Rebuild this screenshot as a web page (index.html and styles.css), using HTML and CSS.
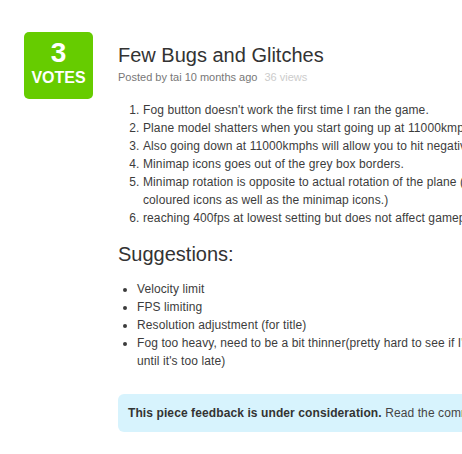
FILE: index.html
```html
<!DOCTYPE html>
<html lang="en">
<head>
<meta charset="utf-8">
<title>Few Bugs and Glitches</title>
<link rel="stylesheet" href="styles.css">
</head>
<body>
<div class="page">
  <div class="votes">
    <span class="votes-count">3</span>
    <span class="votes-label">VOTES</span>
  </div>
  <article class="idea">
    <h1 class="idea-title">Few Bugs and Glitches</h1>
    <p class="idea-meta">Posted by tai 10 months ago <span class="idea-views">36 views</span></p>
    <ol class="bug-list">
      <li>Fog button doesn't work the first time I ran the game.</li>
      <li>Plane model shatters when you start going up at 11000kmphs.</li>
      <li>Also going down at 11000kmphs will allow you to hit negative altitude.</li>
      <li>Minimap icons goes out of the grey box borders.</li>
      <li>Minimap rotation is opposite to actual rotation of the plane (both the coloured icons as well as the minimap icons.)</li>
      <li>reaching 400fps at lowest setting but does not affect gameplay.</li>
    </ol>
    <h2 class="section-title">Suggestions:</h2>
    <ul class="suggest-list">
      <li>Velocity limit</li>
      <li>FPS limiting</li>
      <li>Resolution adjustment (for title)</li>
      <li>Fog too heavy, need to be a bit thinner(pretty hard to see if I'm crashing until it's too late)</li>
    </ul>
    <div class="status"><strong>This piece feedback is under consideration.</strong> Read the comments.</div>
  </article>
</div>
</body>
</html>
```
FILE: styles.css
```css
html, body {
  margin: 0;
  padding: 0;
  overflow: hidden;
  background: #ffffff;
}
body {
  font-family: "Liberation Sans", Arial, sans-serif;
  font-size: 12px;
  color: #3c3c3c;
}
.page {
  display: flex;
  align-items: flex-start;
  gap: 25px;
  padding: 32px 0 0 24px;
  width: 600px;
}
.votes {
  flex: none;
  box-sizing: border-box;
  width: 69px;
  height: 67px;
  padding-top: 7px;
  background: #66cc00;
  border-radius: 5px;
  color: #ffffff;
  display: flex;
  flex-direction: column;
  align-items: center;
  font-weight: bold;
}
.votes-count {
  font-size: 28px;
  line-height: 28px;
}
.votes-label {
  margin-top: 3px;
  font-size: 16px;
  line-height: 16px;
}
.idea {
  flex: none;
  width: 418px;
}
.idea-title {
  margin: 11px 0 0;
  font-size: 20px;
  line-height: 24px;
  font-weight: normal;
  color: #333333;
}
.idea-meta {
  margin: 2px 0 0;
  font-size: 11px;
  line-height: 16px;
  color: #777777;
}
.idea-views {
  margin-left: 4px;
  color: #cccccc;
}
.bug-list {
  margin: 16px 0 0;
  padding-left: 25px;
  line-height: 18px;
  letter-spacing: 0.1px;
}
.section-title {
  margin: 15px 0 0;
  font-size: 20px;
  line-height: 24px;
  font-weight: normal;
  color: #333333;
}
.suggest-list {
  margin: 14px 0 0;
  padding-left: 19px;
  line-height: 18px;
  letter-spacing: 0.1px;
}
.status {
  margin-top: 24px;
  padding: 10px;
  line-height: 18px;
  background: #d7f3fd;
  border-radius: 6px;
  color: #444444;
  letter-spacing: 0.1px;
}
.status strong {
  color: #333333;
}
```
